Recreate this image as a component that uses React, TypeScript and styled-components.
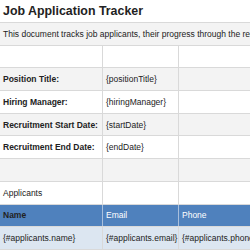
import styled, { createGlobalStyle } from 'styled-components';

const GlobalStyle = createGlobalStyle`
    html, body {
        margin: 0;
        padding: 0;
        background: #ffffff;
        overflow: hidden;
    }

    body {
        font-family: 'Liberation Sans', Arial, sans-serif;
        color: #222222;
    }
`;

const Sheet = styled.div`
    width: 250px;
    overflow: hidden;
    display: flex;
    flex-direction: column;
`;

type RowProps = {
    $tone?: 'white' | 'grey' | 'header' | 'data';
    $merged?: boolean;
};

const rowBackground = {
    white: '#ffffff',
    grey: '#f3f3f3',
    header: '#4f81bd',
    data: '#dce6f1',
};

const Row = styled.div<RowProps>`
    display: grid;
    grid-template-columns: ${({ $merged }) => ($merged ? 'minmax(0, 1fr)' : '103px 76px minmax(0, 1fr)')};
    height: 22.7px;
    box-sizing: border-box;
    border-bottom: 1px solid #d9d9d9;
    background: ${({ $tone = 'white' }) => rowBackground[$tone]};
`;

const TitleRow = styled(Row)`
    height: 23px;
`;

const Cell = styled.div<{ $bold?: boolean; $light?: boolean; $header?: boolean }>`
    display: flex;
    align-items: center;
    padding: 0 3px;
    box-sizing: border-box;
    border-right: 1px solid ${({ $header }) => ($header ? '#a9bfdc' : '#d9d9d9')};
    font-size: 8.5px;
    font-weight: ${({ $bold }) => ($bold ? 700 : 400)};
    color: ${({ $light }) => ($light ? '#ffffff' : '#222222')};
    white-space: nowrap;
    overflow: hidden;

    &:last-child {
        border-right: none;
    }
`;

const Title = styled(Cell)`
    font-size: 12.4px;
    font-weight: 700;
`;

const fields = [
    ['Position Title:', '{positionTitle}'],
    ['Hiring Manager:', '{hiringManager}'],
    ['Recruitment Start Date:', '{startDate}'],
    ['Recruitment End Date:', '{endDate}'],
];

const App = (): JSX.Element => (
    <>
        <GlobalStyle />
        <Sheet>
            <TitleRow $merged>
                <Title>Job Application Tracker</Title>
            </TitleRow>
            <Row $merged $tone="grey">
                <Cell>This document tracks job applicants, their progress through the recruitment process and outcomes.</Cell>
            </Row>
            <Row>
                <Cell />
                <Cell />
                <Cell />
            </Row>
            {fields.map(([label, value], i) => (
                <Row key={label} $tone={i % 2 === 0 ? 'grey' : 'white'}>
                    <Cell $bold>{label}</Cell>
                    <Cell>{value}</Cell>
                    <Cell />
                </Row>
            ))}
            <Row $tone="grey">
                <Cell />
                <Cell />
                <Cell />
            </Row>
            <Row>
                <Cell>Applicants</Cell>
                <Cell />
                <Cell />
            </Row>
            <Row $tone="header">
                <Cell $header $bold>Name</Cell>
                <Cell $header $light>Email</Cell>
                <Cell $header $light>Phone</Cell>
            </Row>
            <Row $tone="data">
                <Cell>{'{#applicants.name}'}</Cell>
                <Cell>{'{#applicants.email}'}</Cell>
                <Cell>{'{#applicants.phone}'}</Cell>
            </Row>
        </Sheet>
    </>
);

export default App;
